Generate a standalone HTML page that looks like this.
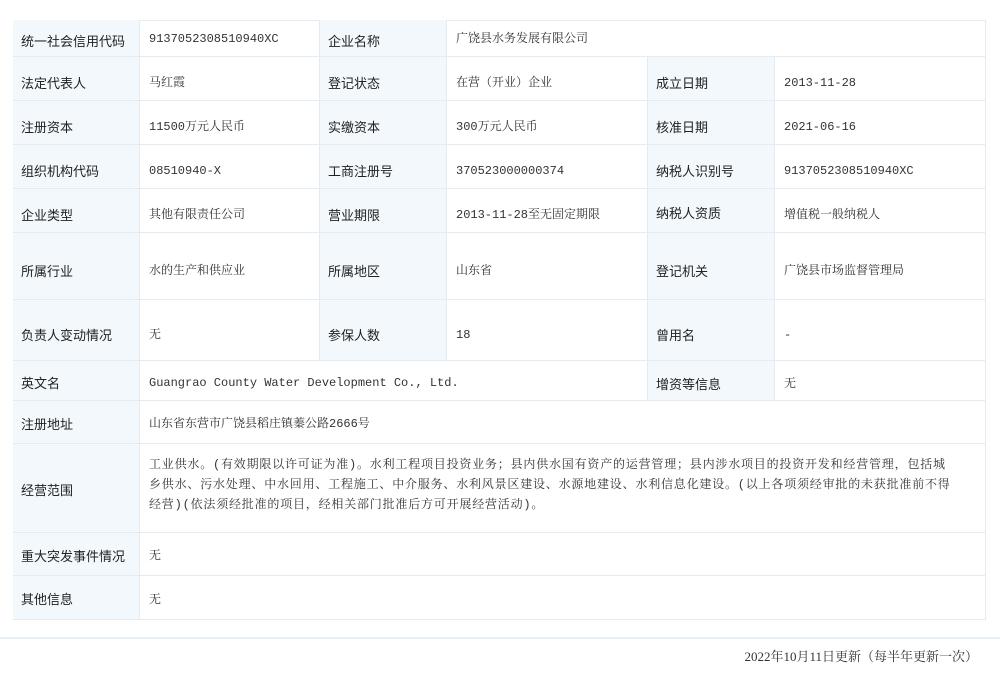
<!DOCTYPE html>
<html><head><meta charset="utf-8"><style>
body{margin:0;width:1000px;height:678px;background:#fff;position:relative;overflow:hidden}
.c{position:absolute;box-sizing:border-box;border-right:1px solid #e4ecf3;border-bottom:1px solid #e4ecf3;display:flex;align-items:center;font-size:13px;color:#333}
.l{background:#f2f8fc;padding:8px 0 0 8px;font-family:"Liberation Sans","Noto Sans CJK SC",sans-serif;color:#222}
.v{padding:9px 8px 0 9px;font-family:"Liberation Mono","Noto Serif CJK SC",serif;font-size:12px;color:#333;line-height:20px}
#t{position:absolute;left:13px;top:20px;width:973px;height:600px;border-top:1px solid #e4ecf3;border-left:1px solid #e4ecf3;box-sizing:border-box}
.ft{position:absolute;left:0;top:637px;width:1000px;border-top:2px solid #e8f0f7}
.fx{position:absolute;right:22px;top:646px;font-size:13px;font-family:"Liberation Serif","Noto Serif CJK SC",serif;color:#333}
</style></head><body>
<div id="t"></div>
<div class="c l" style="left:13px;top:20px;width:127px;height:37px;padding-top:4px">统一社会信用代码</div>
<div class="c v" style="left:140px;top:20px;width:180px;height:37px;padding-top:2px">9137052308510940XC</div>
<div class="c l" style="left:320px;top:20px;width:127px;height:37px;padding-top:4px">企业名称</div>
<div class="c v" style="left:447px;top:20px;width:539px;height:37px;padding-top:2px">广饶县水务发展有限公司</div>

<div class="c l" style="left:13px;top:57px;width:127px;height:44px">法定代表人</div>
<div class="c v" style="left:140px;top:57px;width:180px;height:44px">马红霞</div>
<div class="c l" style="left:320px;top:57px;width:127px;height:44px">登记状态</div>
<div class="c v" style="left:447px;top:57px;width:201px;height:44px">在营（开业）企业</div>
<div class="c l" style="left:648px;top:57px;width:127px;height:44px">成立日期</div>
<div class="c v" style="left:775px;top:57px;width:211px;height:44px">2013-11-28</div>

<div class="c l" style="left:13px;top:101px;width:127px;height:44px">注册资本</div>
<div class="c v" style="left:140px;top:101px;width:180px;height:44px">11500万元人民币</div>
<div class="c l" style="left:320px;top:101px;width:127px;height:44px">实缴资本</div>
<div class="c v" style="left:447px;top:101px;width:201px;height:44px">300万元人民币</div>
<div class="c l" style="left:648px;top:101px;width:127px;height:44px">核准日期</div>
<div class="c v" style="left:775px;top:101px;width:211px;height:44px">2021-06-16</div>

<div class="c l" style="left:13px;top:145px;width:127px;height:44px">组织机构代码</div>
<div class="c v" style="left:140px;top:145px;width:180px;height:44px">08510940-X</div>
<div class="c l" style="left:320px;top:145px;width:127px;height:44px">工商注册号</div>
<div class="c v" style="left:447px;top:145px;width:201px;height:44px">370523000000374</div>
<div class="c l" style="left:648px;top:145px;width:127px;height:44px">纳税人识别号</div>
<div class="c v" style="left:775px;top:145px;width:211px;height:44px">9137052308510940XC</div>

<div class="c l" style="left:13px;top:189px;width:127px;height:44px">企业类型</div>
<div class="c v" style="left:140px;top:189px;width:180px;height:44px">其他有限责任公司</div>
<div class="c l" style="left:320px;top:189px;width:127px;height:44px">营业期限</div>
<div class="c v" style="left:447px;top:189px;width:201px;height:44px">2013-11-28至无固定期限</div>
<div class="c l" style="left:648px;top:189px;width:127px;height:44px;padding-top:4px">纳税人资质</div>
<div class="c v" style="left:775px;top:189px;width:211px;height:44px">增值税一般纳税人</div>

<div class="c l" style="left:13px;top:233px;width:127px;height:67px">所属行业</div>
<div class="c v" style="left:140px;top:233px;width:180px;height:67px">水的生产和供应业</div>
<div class="c l" style="left:320px;top:233px;width:127px;height:67px">所属地区</div>
<div class="c v" style="left:447px;top:233px;width:201px;height:67px">山东省</div>
<div class="c l" style="left:648px;top:233px;width:127px;height:67px">登记机关</div>
<div class="c v" style="left:775px;top:233px;width:211px;height:67px">广饶县市场监督管理局</div>

<div class="c l" style="left:13px;top:300px;width:127px;height:61px">负责人变动情况</div>
<div class="c v" style="left:140px;top:300px;width:180px;height:61px">无</div>
<div class="c l" style="left:320px;top:300px;width:127px;height:61px">参保人数</div>
<div class="c v" style="left:447px;top:300px;width:201px;height:61px">18</div>
<div class="c l" style="left:648px;top:300px;width:127px;height:61px">曾用名</div>
<div class="c v" style="left:775px;top:300px;width:211px;height:61px">-</div>

<div class="c l" style="left:13px;top:361px;width:127px;height:40px;padding-top:4px">英文名</div>
<div class="c v" style="left:140px;top:361px;width:508px;height:40px;padding-top:4px">Guangrao County Water Development Co., Ltd.</div>
<div class="c l" style="left:648px;top:361px;width:127px;height:40px;padding-top:6px">增资等信息</div>
<div class="c v" style="left:775px;top:361px;width:211px;height:40px;padding-top:6px">无</div>

<div class="c l" style="left:13px;top:401px;width:127px;height:43px;padding-top:2px">注册地址</div>
<div class="c v" style="left:140px;top:401px;width:846px;height:43px;padding-top:4px">山东省东营市广饶县稻庄镇蓁公路2666号</div>

<div class="c l" style="left:13px;top:444px;width:127px;height:89px;padding-top:2px">经营范围</div>
<div class="c v" style="left:140px;top:444px;width:846px;height:89px;align-items:flex-start;padding-top:11px;padding-right:28px;letter-spacing:0.8px">工业供水。(有效期限以许可证为准)。水利工程项目投资业务；县内供水国有资产的运营管理；县内涉水项目的投资开发和经营管理，包括城乡供水、污水处理、中水回用、工程施工、中介服务、水利风景区建设、水源地建设、水利信息化建设。(以上各项须经审批的未获批准前不得经营)(依法须经批准的项目，经相关部门批准后方可开展经营活动)。</div>

<div class="c l" style="left:13px;top:533px;width:127px;height:43px;padding-top:2px">重大突发事件情况</div>
<div class="c v" style="left:140px;top:533px;width:846px;height:43px;padding-top:4px">无</div>
<div class="c l" style="left:13px;top:576px;width:127px;height:44px;padding-top:2px">其他信息</div>
<div class="c v" style="left:140px;top:576px;width:846px;height:44px;padding-top:4px">无</div>

<div class="ft"></div>
<div class="fx">2022年10月11日更新（每半年更新一次）</div>
</body></html>
